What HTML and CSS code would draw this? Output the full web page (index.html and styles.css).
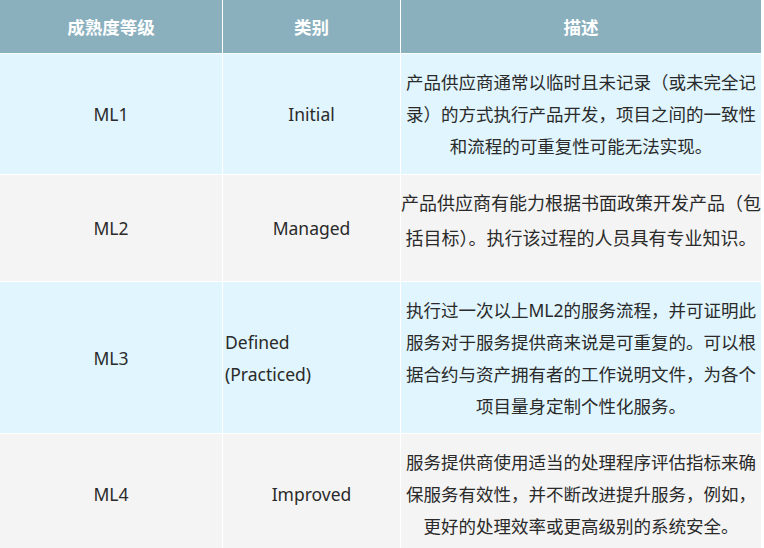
FILE: index.html
```html
<!DOCTYPE html>
<html lang="zh-CN">
<head>
<meta charset="utf-8">
<title>成熟度等级</title>
<link rel="stylesheet" href="styles.css">
</head>
<body>
<div class="table">
  <div class="cell head">成熟度等级</div>
  <div class="cell head">类别</div>
  <div class="cell head">描述</div>

  <div class="cell blue">ML1</div>
  <div class="cell blue">Initial</div>
  <div class="cell blue desc">产品供应商通常以临时且未记录（或未完全记<br>录）的方式执行产品开发，项目之间的一致性<br>和流程的可重复性可能无法实现。</div>

  <div class="cell gray">ML2</div>
  <div class="cell gray">Managed</div>
  <div class="cell gray desc wide">产品供应商有能力根据书面政策开发产品（包<br>括目标）。执行该过程的人员具有专业知识。</div>

  <div class="cell blue">ML3</div>
  <div class="cell blue left">Defined<br>(Practiced)</div>
  <div class="cell blue desc">执行过一次以上ML2的服务流程，并可证明此<br>服务对于服务提供商来说是可重复的。可以根<br>据合约与资产拥有者的工作说明文件，为各个<br>项目量身定制个性化服务。</div>

  <div class="cell gray">ML4</div>
  <div class="cell gray">Improved</div>
  <div class="cell gray desc">服务提供商使用适当的处理程序评估指标来确<br>保服务有效性，并不断改进提升服务，例如，<br>更好的处理效率或更高级别的系统安全。</div>
</div>
</body>
</html>
```

FILE: styles.css
```css
html, body {
  margin: 0;
  padding: 0;
  background: #ffffff;
}

body {
  font-family: "Noto Sans", "Noto Sans CJK SC", sans-serif;
  font-size: 17.5px;
  color: #2a2a2a;
}

.table {
  display: grid;
  grid-template-columns: 222px 177px 360px;
  grid-template-rows: 53px 120px 106px 151px 120px;
  gap: 1px;
  background: #ffffff;
  width: 761px;
}

.cell {
  display: flex;
  align-items: center;
  justify-content: center;
  text-align: center;
  line-height: 32px;
}

.head {
  background: #8ab0be;
  color: #ffffff;
  font-weight: 700;
  font-size: 17.5px;
}

.blue {
  background: #e0f5fd;
}

.gray {
  background: #f4f4f4;
}

.desc {
  white-space: nowrap;
}

.wide {
  font-size: 18px;
  line-height: 35px;
  padding-bottom: 14px;
}

.left {
  justify-content: flex-start;
  text-align: left;
  padding-left: 2px;
}
```
